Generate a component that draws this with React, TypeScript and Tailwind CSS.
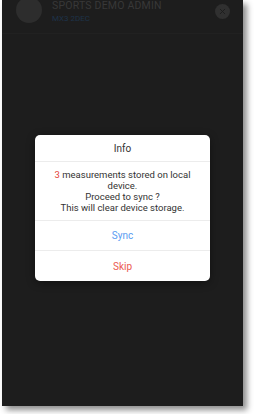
import { X } from 'lucide-react'

export default function App() {
  return (
    <div className="h-[414px] w-[254px] bg-white font-['Roboto',sans-serif]">
      <div className="relative ml-[2px] h-[406px] w-[241px] overflow-hidden bg-[#1d1d1d] shadow-[4px_4px_6px_rgba(0,0,0,0.45)]">
        {/* dimmed page underneath */}
        <div className="flex h-[34px] items-start border-b border-[#212121] pl-[14px] pr-[13px]">
          <div className="-mt-[3px] h-[26px] w-[26px] shrink-0 rounded-full bg-[#2d2d2d]" />
          <div className="ml-[10px] flex flex-1 flex-col">
            <span className="text-[10.5px] leading-[11px] tracking-[0.2px] text-[#383838]">SPORTS DEMO ADMIN</span>
            <span className="mt-[3px] text-[8px] leading-[10px] text-[#1d3349]">MX3 2DEC</span>
          </div>
          <div className="mt-[4px] flex h-[15px] w-[15px] items-center justify-center rounded-full bg-[#303030]">
            <X className="h-[9px] w-[9px] text-[#1d1d1d]" strokeWidth={2.5} />
          </div>
        </div>

        {/* modal */}
        <div className="absolute inset-0 flex items-center justify-center pt-[10px]">
          <div className="w-[175px] overflow-hidden rounded-[5px] bg-white text-center shadow-[0_2px_8px_rgba(0,0,0,0.4)]">
            <div className="flex h-[27px] items-center justify-center border-b border-[#ececec] text-[10px] text-[#333]">
              Info
            </div>
            <div className="border-b border-[#ececec] px-[6px] py-[7px] text-[9.5px] leading-[11px] text-[#333]">
              <p>
                <span className="text-[#e5443a]">3</span> measurements stored on local device.
              </p>
              <p>Proceed to sync ?</p>
              <p>This will clear device storage.</p>
            </div>
            <div className="flex h-[30px] items-center justify-center border-b border-[#ececec] text-[10px] text-[#5a9cf2]">
              Sync
            </div>
            <div className="flex h-[30px] items-center justify-center text-[10px] text-[#eb5a50]">Skip</div>
          </div>
        </div>
      </div>
    </div>
  )
}
